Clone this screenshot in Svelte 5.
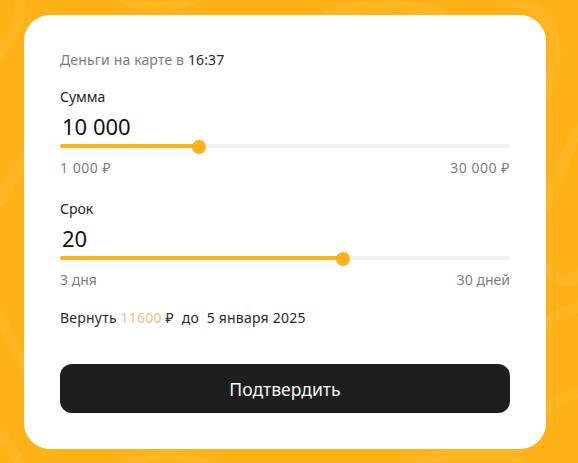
<script lang="ts">
  const sliders = [
    { label: 'Сумма', value: '10 000', min: '1 000 ₽', max: '30 000 ₽', pct: 30.9, wide: true },
    { label: 'Срок', value: '20', min: '3 дня', max: '30 дней', pct: 62.8, wide: false }
  ];
</script>

<main class="page">
  <svg class="swirls" viewBox="0 0 578 463" aria-hidden="true">
    <g fill="none" stroke="#ffc543" stroke-opacity="0.22" stroke-width="11" stroke-linecap="round">
      <path d="M-6 62 C10 40 22 28 20 4" />
      <path d="M2 200 C10 180 16 170 24 160" />
      <path d="M-4 308 C6 330 14 350 26 366" />
      <path d="M-4 430 C8 440 18 462 24 470" />
      <path d="M120 -4 C140 10 170 12 200 -4" />
      <path d="M330 14 C360 2 400 4 440 12" />
      <path d="M500 -4 C530 8 560 10 556 60 C552 84 548 90 546 96" />
      <path d="M578 130 C566 150 556 190 546 205" />
      <path d="M548 322 C560 312 570 310 582 306" />
      <path d="M546 268 C556 280 570 290 584 270" />
      <path d="M548 408 C560 398 570 394 582 392" />
      <path d="M120 470 C150 450 180 450 210 466" />
      <path d="M400 470 C430 452 470 450 520 456" />
    </g>
  </svg>

  <section class="card">
    <p class="eta">Деньги на карте в <span>16:37</span></p>

    {#each sliders as s}
      <div class="field">
        <div class="label">{s.label}</div>
        <div class="value">{s.value}</div>
        <div class="track">
          <div class="fill" style="width: {s.pct}%">
            <span class="thumb"></span>
          </div>
        </div>
        <div class="limits" class:wide={s.wide}>
          <span>{s.min}</span>
          <span>{s.max}</span>
        </div>
      </div>
    {/each}

    <p class="summary">Вернуть <em>11600</em> ₽&nbsp; до&nbsp; 5 января 2025</p>

    <button type="button" class="confirm">Подтвердить</button>
  </section>
</main>

<style>
  :global(body) {
    margin: 0;
    background: #ffb217;
    font-family: 'Noto Sans', 'Open Sans', sans-serif;
  }

  .page {
    position: relative;
    height: 463px;
    padding: 15px 32px 14px 24px;
    box-sizing: border-box;
    overflow: hidden;
  }

  .swirls {
    position: absolute;
    inset: 0;
    width: 100%;
    height: 100%;
  }

  .card {
    position: relative;
    box-sizing: border-box;
    height: 434px;
    padding: 35px 36px;
    background: #fff;
    border-radius: 26px;
    display: flex;
    flex-direction: column;
  }

  .eta {
    margin: 0 0 17px;
    font-size: 14px;
    letter-spacing: 0.15px;
    line-height: 20px;
    color: #7d7d7d;
  }

  .eta span {
    color: #2b2b2b;
  }

  .field {
    margin-bottom: 21px;
  }

  .label {
    font-size: 14px;
    line-height: 20px;
    color: #1f1f1f;
  }

  .value {
    margin: 6px 0 0 2px;
    font-size: 22px;
    line-height: 26px;
    color: #111;
  }

  .track {
    height: 4px;
    margin-top: 5px;
    background: #f2f2f2;
    border-radius: 2px;
  }

  .fill {
    position: relative;
    height: 100%;
    background: #ffb217;
    border-radius: 2px;
  }

  .thumb {
    position: absolute;
    right: -7px;
    top: -4px;
    width: 14px;
    height: 14px;
    border-radius: 50%;
    background: #ffb217;
  }

  .limits {
    display: flex;
    justify-content: space-between;
    margin-top: 10px;
    font-size: 14px;
    line-height: 20px;
    color: #7f7f7f;
  }

  .limits.wide {
    letter-spacing: 0.55px;
  }

  .summary {
    margin: -3px 0 0;
    font-size: 14px;
    letter-spacing: 0.22px;
    line-height: 20px;
    color: #2b2b2b;
  }

  .summary em {
    font-style: normal;
    color: #ecc27a;
  }

  .confirm {
    margin-top: 36px;
    height: 49px;
    width: 100%;
    border: 0;
    border-radius: 12px;
    background: #1e1e1e;
    color: #f5f5f5;
    font: inherit;
    font-size: 17.6px;
    cursor: pointer;
  }
</style>
